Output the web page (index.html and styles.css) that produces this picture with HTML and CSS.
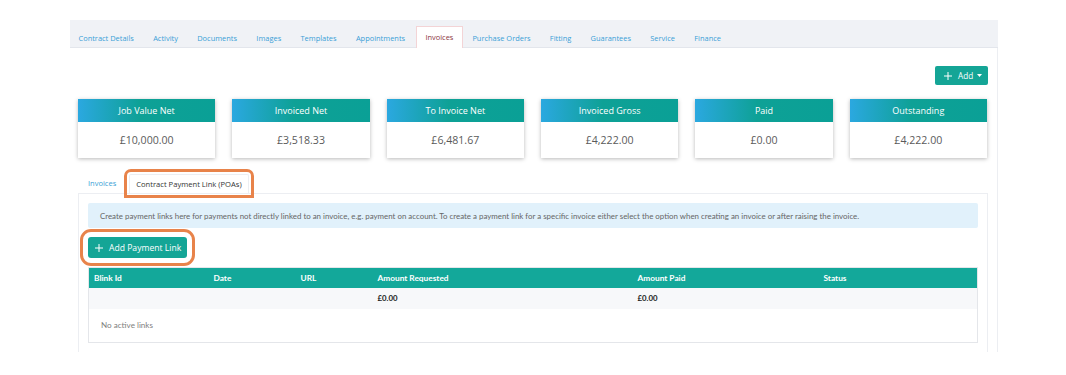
FILE: index.html
```html
<!DOCTYPE html>
<html>
<head>
<meta charset="utf-8">
<link rel="stylesheet" href="styles.css">
</head>
<body>
<div class="page">
  <nav class="tabbar">
    <a class="tab">Contract Details</a>
    <a class="tab">Activity</a>
    <a class="tab">Documents</a>
    <a class="tab">Images</a>
    <a class="tab">Templates</a>
    <a class="tab">Appointments</a>
    <a class="tab active">Invoices</a>
    <a class="tab">Purchase Orders</a>
    <a class="tab">Fitting</a>
    <a class="tab">Guarantees</a>
    <a class="tab">Service</a>
    <a class="tab">Finance</a>
  </nav>
  <main class="panel">
    <div class="toolbar">
      <button class="btn btn-add">
        <svg class="plus" width="8" height="8" viewBox="0 0 8 8"><path d="M4 0V8M0 4H8" stroke="#fff" stroke-width="1"/></svg>
        <span>Add</span>
        <svg class="caret" width="5" height="3" viewBox="0 0 5 3"><path d="M0 0H5L2.5 3Z" fill="#fff"/></svg>
      </button>
    </div>
    <section class="cards">
      <div class="card"><div class="card-head">Job Value Net</div><div class="card-body">£10,000.00</div></div>
      <div class="card"><div class="card-head">Invoiced Net</div><div class="card-body">£3,518.33</div></div>
      <div class="card"><div class="card-head">To Invoice Net</div><div class="card-body">£6,481.67</div></div>
      <div class="card"><div class="card-head">Invoiced Gross</div><div class="card-body">£4,222.00</div></div>
      <div class="card"><div class="card-head">Paid</div><div class="card-body">£0.00</div></div>
      <div class="card"><div class="card-head">Outstanding</div><div class="card-body">£4,222.00</div></div>
    </section>
    <nav class="subtabs">
      <a class="subtab">Invoices</a>
      <a class="subtab active highlight">Contract Payment Link (POAs)</a>
    </nav>
    <section class="subpanel">
      <div class="alert">Create payment links here for payments not directly linked to an invoice, e.g. payment on account. To create a payment link for a specific invoice either select the option when creating an invoice or after raising the invoice.</div>
      <div class="actions">
        <button class="btn btn-link highlight2">
          <svg class="plus" width="8" height="8" viewBox="0 0 8 8"><path d="M4 0V8M0 4H8" stroke="#fff" stroke-width="1"/></svg>
          <span>Add Payment Link</span>
        </button>
      </div>
      <table class="links">
        <thead>
          <tr>
            <th class="c1">Blink Id</th>
            <th class="c2">Date</th>
            <th class="c3">URL</th>
            <th class="c4">Amount Requested</th>
            <th class="c5">Amount Paid</th>
            <th class="c6">Status</th>
          </tr>
        </thead>
        <tbody>
          <tr class="totals">
            <td></td><td></td><td></td><td>£0.00</td><td>£0.00</td><td></td>
          </tr>
          <tr class="empty">
            <td colspan="6">No active links</td>
          </tr>
        </tbody>
      </table>
    </section>
  </main>
</div>
</body>
</html>
```
FILE: styles.css
```css
* { box-sizing: border-box; }
body {
  margin: 0;
  background: #fff;
  font-family: "Open Sans", "Liberation Sans", sans-serif;
  color: #555;
}
.page {
  margin: 20px 0 0 70px;
  width: 928px;
}
.tabbar {
  display: flex;
  align-items: flex-end;
  height: 28px;
  background: #f0f2f6;
  border-bottom: 1px solid #e3e6ec;
}
.tab {
  display: block;
  height: 21px;
  line-height: 20px;
  padding: 0 8.8px 0 7.5px;
  font-size: 7.45px;
  color: #3a9fd6;
  border: 1px solid transparent;
  border-bottom: none;
  margin-bottom: -1px;
  margin-right: 1px;
}
.tab.active {
  background: #fff;
  color: #8b3540;
  border-color: #f3d4d6;
  height: 22px;
  padding: 0 8.5px;
}
.panel {
  padding: 18px 9px 0 8px;
  border-right: 1px solid #eceef2;
}
.toolbar {
  display: flex;
  justify-content: flex-end;
}
.btn {
  display: inline-flex;
  align-items: center;
  border: none;
  border-radius: 2px;
  background: #14a596;
  color: #fff;
  font-family: "Open Sans", "Liberation Sans", sans-serif;
  cursor: pointer;
}
.btn-add {
  height: 19px;
  width: 53px;
  padding: 0 0 0 9px;
  font-size: 8.2px;
}
.btn-add .plus { margin-right: 6px; }
.btn-add .caret { margin-left: 4px; }
.cards {
  display: grid;
  grid-template-columns: repeat(6, 1fr);
  gap: 17px;
  margin-top: 14px;
  padding-right: 1px;
}
.card {
  background: #fff;
  box-shadow: 0 1px 4px rgba(0,0,0,0.28);
}
.card-head {
  height: 23px;
  line-height: 23px;
  text-align: center;
  color: #fff;
  font-size: 9px;
  background: linear-gradient(90deg, #2ba8e0 0%, #0ea196 45%, #0aa096 100%);
}
.card-body {
  height: 36px;
  line-height: 36px;
  text-align: center;
  font-size: 10.6px;
  color: #5a5a5a;
}
.subtabs {
  display: flex;
  align-items: flex-end;
  gap: 6px;
  margin-top: 16px;
  padding-left: 3px;
  height: 19px;
}
.subtab {
  display: block;
  height: 19px;
  line-height: 19px;
  padding: 0 7px;
  font-size: 7.5px;
  color: #3a9fd6;
}
.subtab.active {
  background: #fff;
  color: #333;
  font-size: 7.6px;
  border: 1px solid #eceef2;
  border-bottom: none;
  border-radius: 2px 2px 0 0;
  position: relative;
  z-index: 1;
  padding: 0 6px;
}
.highlight {
  outline: 3px solid #e8834a;
  outline-offset: 2px;
  border-radius: 3px;
}
.subpanel {
  border: 1px solid #eceef2;
  border-bottom: none;
  padding: 9px 9px 9px 9px;
}
.alert {
  height: 25px;
  display: flex;
  align-items: center;
  padding: 0 12px;
  background: #e1f1fb;
  border-radius: 2px;
  font-family: "Lato", "Liberation Sans", sans-serif;
  font-size: 7.9px;
  color: #666;
  white-space: nowrap;
}
.actions {
  margin-top: 9px;
  height: 21px;
  display: flex;
}
.btn-link {
  height: 21px;
  width: 99px;
  padding: 0 0 0 7px;
  font-size: 8.6px;
}
.btn-link .plus { margin-right: 6px; }
.highlight2 {
  outline: 3px solid #e8834a;
  outline-offset: 5px;
  border-radius: 3px;
}
.links {
  width: 100%;
  margin-top: 9px;
  border-collapse: collapse;
  border: 1px solid #e4e6ea;
  font-family: "Lato", "Liberation Sans", sans-serif;
  font-size: 8.3px;
}
.links th {
  background: #13a89a;
  color: #fff;
  font-weight: bold;
  text-align: left;
  height: 20px;
  padding: 0 5px;
}
.links .c1 { width: 120px; }
.links .c2 { width: 87px; }
.links .c3 { width: 77px; }
.links .c4 { width: 260px; }
.links .c5 { width: 186px; }
.links td {
  padding: 0 5px;
  text-align: left;
}
.links .totals td {
  height: 21px;
  background: #f7f8fa;
  font-weight: bold;
  color: #222;
  font-size: 7.8px;
}
.links .empty td {
  height: 34px;
  padding-left: 12px;
  color: #808080;
  font-size: 8.1px;
}
```
